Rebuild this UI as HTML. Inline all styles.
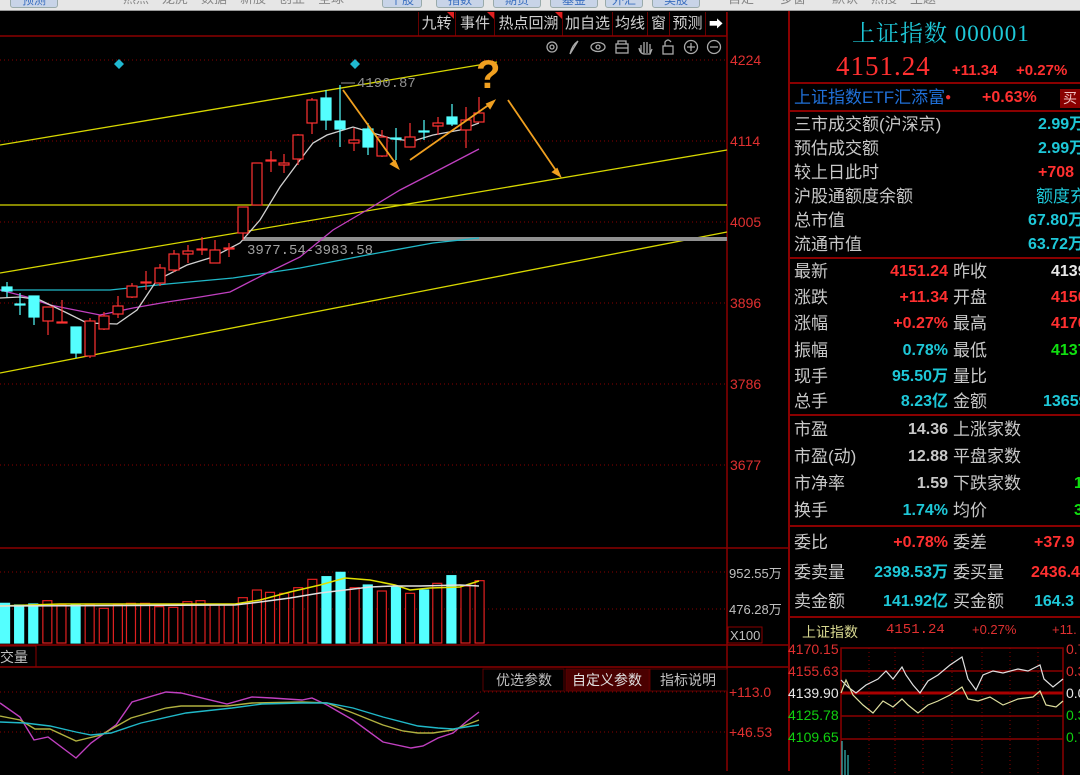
<!DOCTYPE html>
<html><head><meta charset="utf-8">
<style>
*{margin:0;padding:0;box-sizing:border-box}
body{width:1080px;height:771px;background:#000;position:relative;overflow:hidden;font-family:"Liberation Sans","Noto Sans CJK SC",sans-serif;color:#c0c0c0}
.topbar{position:absolute;left:0;top:0;width:1080px;height:11px;background:#e6e6e6;border-bottom:1px solid #999;overflow:hidden;font-size:13px;color:#888;line-height:2px;white-space:nowrap}
.topbar span{position:absolute;top:-2px}
.topbar b{position:absolute;top:-6px;height:14px;background:#c8d4e8;border:1px solid #9aa;border-radius:3px;font-weight:normal;color:#3a6fc0;font-size:12px;line-height:10px;text-align:center}
.tb{position:absolute;top:12px;height:24px;border-left:1px solid #600;font-size:15px;color:#d0d0d0;line-height:24px;text-align:center}
.tri{position:absolute;right:0;top:0;width:0;height:0;border-top:7px solid #e02020;border-left:7px solid transparent}
.rp{position:absolute;left:788px;top:11px;width:292px;height:760px;border-left:2px solid #8a0000}
.row{position:absolute;left:4px;font-size:17px;color:#c8c8c8;white-space:nowrap;line-height:20px}
.val{position:absolute;font-size:16px;font-weight:bold;white-space:nowrap;line-height:20px;text-align:right}
.hl{position:absolute;left:0;width:292px;height:2px;background:#8a0000}
.c{color:#1ec8d8}.r{color:#ff3030}.g{color:#10e010}.w{color:#e8e8e8}
</style></head><body>
<div class="topbar">
<b style="left:10px;width:48px">预测</b>
<span style="left:123px">热点　龙虎　数据　新股　创业　全球</span>
<b style="left:382px;width:40px">个股</b><b style="left:436px;width:48px">指数</b><b style="left:493px;width:48px">期货</b><b style="left:550px;width:48px">基金</b><b style="left:605px;width:38px">外汇</b><b style="left:652px;width:48px">美股</b>
<span style="left:728px">自定　　多窗　　默认　热搜　主题</span>
</div>
<div class="tb" style="left:418px;width:36px">九转<i class="tri"></i></div>
<div class="tb" style="left:455px;width:39px">事件<i class="tri"></i></div>
<div class="tb" style="left:494px;width:68px">热点回溯<i class="tri"></i></div>
<div class="tb" style="left:562px;width:50px">加自选</div>
<div class="tb" style="left:612px;width:35px">均线</div>
<div class="tb" style="left:647px;width:22px">窗</div>
<div class="tb" style="left:669px;width:36px">预测</div>
<div class="tb" style="left:705px;width:22px;border-right:1px solid #600;color:#fff;font-size:14px">➡</div>

<svg style="position:absolute;left:0;top:0" width="790" height="771">
<g stroke="#8a0000" stroke-width="1.5"><line x1="0" y1="36" x2="727" y2="36"/><line x1="727" y1="12" x2="727" y2="771"/><line x1="0" y1="548" x2="788" y2="548"/><line x1="0" y1="645" x2="788" y2="645"/><line x1="0" y1="667" x2="788" y2="667"/></g>
<g stroke="#8a0000" stroke-dasharray="1 3"><line x1="0" y1="60" x2="727" y2="60"/><line x1="0" y1="141" x2="727" y2="141"/><line x1="0" y1="222" x2="727" y2="222"/><line x1="0" y1="303" x2="727" y2="303"/><line x1="0" y1="384" x2="727" y2="384"/><line x1="0" y1="465" x2="727" y2="465"/><line x1="0" y1="572" x2="727" y2="572"/><line x1="0" y1="609" x2="727" y2="609"/><line x1="0" y1="692" x2="727" y2="692"/><line x1="0" y1="732" x2="727" y2="732"/></g>
<g stroke="#aaa" stroke-width="1.3" fill="none">
<circle cx="552" cy="47" r="5"/><circle cx="552" cy="47" r="2"/>
<path d="M570 54 L578 41 M570 54 Q572 45 578 41"/>
<ellipse cx="598" cy="47" rx="7" ry="4.5"/><circle cx="598" cy="47" r="2"/>
<rect x="616" y="44" width="12" height="9"/><path d="M618 44 V41 H626 V44 M616 48 H628"/>
<path d="M641 53 V45 M644 53 V42 M647 53 V42 M650 53 V44 M639 48 Q640 54 645 54 H650 L652 49"/>
<rect x="663" y="46" width="10" height="8"/><path d="M665 46 V42 Q668 38 671 42"/>
<circle cx="691" cy="47" r="6.5"/><path d="M687 47 H695 M691 43 V51"/>
<circle cx="714" cy="47" r="6.5"/><path d="M710 47 H718"/>
</g>
<g stroke="#d8d800" stroke-width="1.3">
<line x1="0" y1="145" x2="497" y2="62"/><line x1="0" y1="273" x2="727" y2="150"/><line x1="0" y1="373" x2="727" y2="232"/><line x1="0" y1="205" x2="727" y2="205"/>
</g>
<rect x="243" y="237" width="484" height="4" fill="#909090"/>
<g fill="none" stroke-width="1.3">
<polyline stroke="#20b8c8" points="0,290 110,290 167,284 233,278 300,268 367,255 433,243 479,238"/>
<polyline stroke="#c040c0" points="0,290 27,297 50,305 100,315 133,308 167,302 200,297 230,292 267,273 300,257 333,230 367,210 400,190 433,173 479,149"/>
<polyline stroke="#d0d0d0" points="0,298 20,297 40,300 67,313 87,323 117,324 137,310 157,280 187,265 213,257 240,243 260,220 280,187 300,160 313,143 327,135 353,127 373,133 393,139 413,141 433,135 460,130 479,123"/>
</g>
<g id="candles"></g>
<text x="357" y="87" fill="#909090" font-size="14" font-family="Liberation Mono,monospace">4190.87</text>
<line x1="341" y1="83" x2="355" y2="83" stroke="#909090"/>
<text x="247" y="254" fill="#a0a0a0" font-size="14" font-family="Liberation Mono,monospace">3977.54-3983.58</text>
<path d="M119 59 l5 5 -5 5 -5 -5z M355 59 l5 5 -5 5 -5 -5z" fill="#20b8d0"/>
<g stroke="#f0a020" stroke-width="1.8" fill="#f0a020">
<line x1="343" y1="90" x2="396" y2="164"/><path d="M398 168 l-7 -4 4 -3z"/>
<line x1="410" y1="160" x2="490" y2="104"/><path d="M494 101 l-4 7 -3 -4z"/>
<line x1="508" y1="100" x2="557" y2="172"/><path d="M560 176 l-7 -4 4 -3z"/>
</g>
<text x="476" y="88" fill="#f0a020" font-size="40" font-weight="bold" font-family="Liberation Sans,sans-serif">?</text>
<g id="vol"></g>
<polyline fill="none" stroke="#e0e000" stroke-width="1.5" points="0,606 60,604 235,604 260,600 290,592 320,585 345,578 370,580 395,585 410,590 430,588 460,587 479,581"/>
<polyline fill="none" stroke="#e0e0e0" stroke-width="1.5" points="0,606 235,605 260,602 290,598 320,593 345,590 370,587 395,586 420,586 460,585 479,586"/>
<g fill="none" stroke-width="1.4">
<polyline stroke="#c040c0" points="0,703 20,717 34,740 48,737 76,758 91,743 116,725 132,702 166,692 181,693 227,704 252,697 272,698 302,700 312,698 327,705 353,720 383,742 411,748 423,746 438,738 453,733 466,722 479,712"/>
<polyline stroke="#b0b040" points="0,716 20,720 35,729 50,729 76,741 101,735 131,718 166,708 181,706 227,706 252,703 302,702 327,703 353,713 383,725 403,731 418,733 433,733 453,730 479,720"/>
<polyline stroke="#20b8c8" points="0,722 25,723 50,726 76,732 91,735 111,733 141,723 186,713 232,708 262,704 302,703 327,703 353,708 383,717 418,726 438,728 453,729 479,725"/>
</g>
<g font-family="Liberation Sans,sans-serif" font-size="14" fill="#e03030">
<text x="730" y="65">4224</text><text x="730" y="146">4114</text><text x="730" y="227">4005</text><text x="730" y="308">3896</text><text x="730" y="389">3786</text><text x="730" y="470">3677</text>
<text x="729" y="697">+113.0</text><text x="729" y="737">+46.53</text>
</g>
<g font-family="Liberation Sans,Noto Sans CJK SC,sans-serif" font-size="13" fill="#c0c0c0">
<text x="729" y="578">952.55万</text><text x="729" y="614">476.28万</text>
<rect x="728" y="627" width="34" height="16" fill="none" stroke="#8a0000"/><text x="730" y="640">X100</text>
<rect x="-1" y="646" width="37" height="21" fill="none" stroke="#8a0000"/><text x="0" y="662" font-size="14">交量</text>
<rect x="483" y="669" width="81" height="22" fill="#000" stroke="#5a0000"/><text x="496" y="685" font-size="14">优选参数</text>
<rect x="566" y="669" width="83" height="22" fill="#4a0000" stroke="#5a0000"/><text x="572" y="685" font-size="14" fill="#e0e0e0">自定义参数</text>
<rect x="650" y="669" width="77" height="22" fill="#000" stroke="#5a0000"/><text x="660" y="685" font-size="14">指标说明</text>
</g>
</svg>

<div class="rp">
<div style="position:absolute;left:62px;top:4px;font-size:23px;color:#1ec8d8;font-family:'Liberation Serif','Noto Serif CJK SC',serif;letter-spacing:1px">上证指数 000001</div>
<div style="position:absolute;left:46px;top:40px;font-size:27px;color:#ff3030;font-family:'Liberation Serif',serif;letter-spacing:1px">4151.24</div>
<div class="val r" style="left:162px;top:50px;font-size:15px">+11.34</div>
<div class="val r" style="left:226px;top:50px;font-size:15px">+0.27%</div>
<div class="hl" style="top:71px"></div>
<div class="row" style="top:77px;color:#2070d8">上证指数ETF汇添富<span style="color:#f03030;font-size:10px;vertical-align:top">●</span></div>
<div class="val r" style="left:192px;top:77px">+0.63%</div>
<div style="position:absolute;left:270px;top:78px;width:24px;height:19px;background:#8a0000;color:#f0c0c0;font-size:14px;line-height:19px;padding-left:3px">买</div>
<div class="hl" style="top:99px"></div>
<div class="row" style="top:104px">三市成交额(沪深京)</div><div class="val c" style="left:248px;top:104px">2.99万</div>
<div class="row" style="top:128px">预估成交额</div><div class="val c" style="left:248px;top:128px">2.99万</div>
<div class="row" style="top:152px">较上日此时</div><div class="val r" style="left:248px;top:152px">+708</div>
<div class="row" style="top:176px">沪股通额度余额</div><div class="val c" style="left:246px;top:176px;font-weight:normal;font-size:17px">额度充</div>
<div class="row" style="top:200px">总市值</div><div class="val c" style="left:238px;top:200px">67.80万</div>
<div class="row" style="top:224px">流通市值</div><div class="val c" style="left:238px;top:224px">63.72万</div>
<div class="hl" style="top:246px"></div>
<div class="row" style="top:251px">最新</div><div class="val r" style="right:132px;top:251px">4151.24</div><div class="row" style="left:163px;top:251px">昨收</div><div class="val w" style="left:261px;top:251px">4139</div>
<div class="row" style="top:277px">涨跌</div><div class="val r" style="right:132px;top:277px">+11.34</div><div class="row" style="left:163px;top:277px">开盘</div><div class="val r" style="left:261px;top:277px">4150</div>
<div class="row" style="top:303px">涨幅</div><div class="val r" style="right:132px;top:303px">+0.27%</div><div class="row" style="left:163px;top:303px">最高</div><div class="val r" style="left:261px;top:303px">4170</div>
<div class="row" style="top:330px">振幅</div><div class="val c" style="right:132px;top:330px">0.78%</div><div class="row" style="left:163px;top:330px">最低</div><div class="val g" style="left:261px;top:330px">4137</div>
<div class="row" style="top:356px">现手</div><div class="val c" style="right:132px;top:356px">95.50万</div><div class="row" style="left:163px;top:356px">量比</div>
<div class="row" style="top:381px">总手</div><div class="val c" style="right:132px;top:381px">8.23亿</div><div class="row" style="left:163px;top:381px">金额</div><div class="val c" style="left:253px;top:381px">13659</div>
<div class="hl" style="top:403px"></div>
<div class="row" style="top:409px">市盈</div><div class="val" style="right:132px;top:409px;color:#c8c8c8">14.36</div><div class="row" style="left:163px;top:409px">上涨家数</div>
<div class="row" style="top:436px">市盈(动)</div><div class="val" style="right:132px;top:436px;color:#c8c8c8">12.88</div><div class="row" style="left:163px;top:436px">平盘家数</div>
<div class="row" style="top:463px">市净率</div><div class="val" style="right:132px;top:463px;color:#c8c8c8">1.59</div><div class="row" style="left:163px;top:463px">下跌家数</div><div class="val g" style="left:284px;top:463px">1</div>
<div class="row" style="top:490px">换手</div><div class="val c" style="right:132px;top:490px">1.74%</div><div class="row" style="left:163px;top:490px">均价</div><div class="val g" style="left:284px;top:490px">3</div>
<div class="hl" style="top:514px"></div>
<div class="row" style="top:522px">委比</div><div class="val r" style="right:132px;top:522px">+0.78%</div><div class="row" style="left:163px;top:522px">委差</div><div class="val r" style="left:244px;top:522px">+37.9</div>
<div class="row" style="top:552px">委卖量</div><div class="val c" style="right:132px;top:552px">2398.53万</div><div class="row" style="left:163px;top:552px">委买量</div><div class="val r" style="left:241px;top:552px">2436.4</div>
<div class="row" style="top:581px">卖金额</div><div class="val c" style="right:132px;top:581px">141.92亿</div><div class="row" style="left:163px;top:581px">买金额</div><div class="val c" style="left:244px;top:581px">164.3</div>
<div class="hl" style="top:605px"></div>
<div style="position:absolute;left:12px;top:611px;font-size:14px;color:#d8d890">上证指数</div>
<div style="position:absolute;left:96px;top:611px;font-size:14px;color:#e03030;font-family:'Liberation Mono',monospace">4151.24</div>
<div style="position:absolute;left:182px;top:611px;font-size:13px;color:#e03030">+0.27%</div>
<div style="position:absolute;left:262px;top:611px;font-size:13px;color:#e03030">+11.</div>
<svg style="position:absolute;left:-2px;top:624px" width="294" height="140">
<g font-family="Liberation Sans,sans-serif" font-size="14">
<text x="0" y="19" fill="#e03030">4170.15</text><text x="0" y="41" fill="#e03030">4155.63</text><text x="0" y="63" fill="#e8e8e8">4139.90</text><text x="0" y="85" fill="#10d010">4125.78</text><text x="0" y="107" fill="#10d010">4109.65</text>
<text x="278" y="19" fill="#e03030">0.7</text><text x="278" y="41" fill="#e03030">0.3</text><text x="278" y="63" fill="#e8e8e8">0.0</text><text x="278" y="85" fill="#10d010">0.3</text><text x="278" y="107" fill="#10d010">0.7</text>
</g>
<g stroke="#8a0000" stroke-width="1.5" fill="none"><rect x="53" y="13" width="222" height="140"/><line x1="53" y1="36" x2="275" y2="36"/><line x1="53" y1="81" x2="275" y2="81"/><line x1="53" y1="104" x2="275" y2="104"/></g>
<line x1="53" y1="58" x2="275" y2="58" stroke="#aa0000" stroke-width="3"/>
<g stroke="#8a0000" stroke-dasharray="1 3"><line x1="81" y1="13" x2="81" y2="140"/><line x1="107" y1="13" x2="107" y2="140"/><line x1="135" y1="13" x2="135" y2="140"/><line x1="164" y1="13" x2="164" y2="140"/><line x1="194" y1="13" x2="194" y2="140"/><line x1="222" y1="13" x2="222" y2="140"/><line x1="250" y1="13" x2="250" y2="140"/></g>
<g transform="translate(-10,0)">
<polyline fill="none" stroke="#e0e0e0" stroke-width="1.2" points="63,45 70,52 78,58 88,50 100,44 108,36 115,44 124,32 128,40 135,50 142,58 150,46 160,40 172,30 184,22 190,44 198,55 205,40 215,36 225,38 240,34 250,36 262,30 266,44 275,52 285,44"/>
<polyline fill="none" stroke="#e0e0a0" stroke-width="1.2" points="63,58 68,45 75,60 85,70 95,78 105,66 115,72 124,64 130,70 140,78 150,70 160,66 172,60 184,52 190,64 200,66 212,62 225,70 240,64 255,62 262,56 268,70 278,72 285,66"/>
<g stroke="#40e0e0"><line x1="64" y1="106" x2="64" y2="140"/><line x1="67" y1="115" x2="67" y2="140"/><line x1="70" y1="120" x2="70" y2="140"/></g>
</g>
</svg>
</div>
<script>
var cd=[[7,287,291,282,297,'c'],[20,304,305,293,315,'c'],[34,296,317,296,325,'c'],[48,307,321,307,335,'r'],[62,322,323,300,323,'r'],[76,327,353,327,358,'c'],[90,321,356,318,358,'r'],[104,316,329,312,330,'r'],[118,306,314,296,318,'r'],[132,286,297,283,298,'r'],[146,282,283,271,290,'r'],[160,268,283,264,286,'r'],[174,254,270,250,272,'r'],[188,251,254,245,263,'r'],[202,249,250,237,255,'r'],[215,250,263,240,263,'r'],[229,248,249,243,257,'r'],[243,207,233,207,240,'r'],[257,163,205,163,205,'r'],[271,160,161,151,172,'r'],[284,163,165,154,173,'r'],[298,135,159,134,165,'r'],[312,100,123,98,134,'r'],[326,98,120,90,130,'c'],[340,121,129,85,147,'c'],[354,140,143,128,151,'r'],[368,129,147,123,155,'c'],[382,137,156,130,157,'r'],[396,138,139,128,160,'c'],[410,137,147,123,147,'r'],[424,131,132,120,140,'c'],[438,123,126,117,135,'r'],[452,117,124,104,126,'c'],[466,120,130,107,148,'r'],[479,113,122,97,122,'r']];
var s='';cd.forEach(function(c){var col=c[5]=='c'?'#54ffff':'#ff3232';s+='<line x1="'+c[0]+'" y1="'+c[3]+'" x2="'+c[0]+'" y2="'+c[4]+'" stroke="'+col+'" stroke-width="1.2"/>';var h=Math.max(1,c[2]-c[1]);s+='<rect x="'+(c[0]-5)+'" y="'+c[1]+'" width="10" height="'+h+'" fill="'+(c[5]=='c'?col:'#000')+'" stroke="'+col+'" stroke-width="1.2"/>';});
document.getElementById('candles').innerHTML=s;
var vb=[[10,'c',190],[38,'c',195],[66,'c',192],[94,'r',182],[122,'r',195],[150,'c',195],[178,'r',195],[206,'r',205],[234,'r',195],[260,'r',190],[288,'r',190],[316,'r',200],[344,'r',202],[372,'r',185],[398,'r',182],[426,'r',195],[454,'r',195],[482,'r',173],[510,'r',150],[536,'r',157],[564,'r',160],[592,'r',143],[620,'r',118],[648,'c',110],[676,'c',97],[704,'r',143],[730,'c',135],[758,'r',153],[786,'c',140],[814,'r',160],[842,'c',150],[868,'r',130],[896,'c',107],[924,'r',138],[952,'r',122]];
var v='';vb.forEach(function(b){var x=b[0]/1.985,t=b[2]/3+540;var col=b[1]=='c'?'#54ffff':'#e02020';v+='<rect x="'+(x-4.5)+'" y="'+t+'" width="9" height="'+(643-t)+'" fill="'+(b[1]=='c'?col:'#000')+'" stroke="'+col+'" stroke-width="1.2"/>';});
document.getElementById('vol').innerHTML=v;
</script>
</body></html>
